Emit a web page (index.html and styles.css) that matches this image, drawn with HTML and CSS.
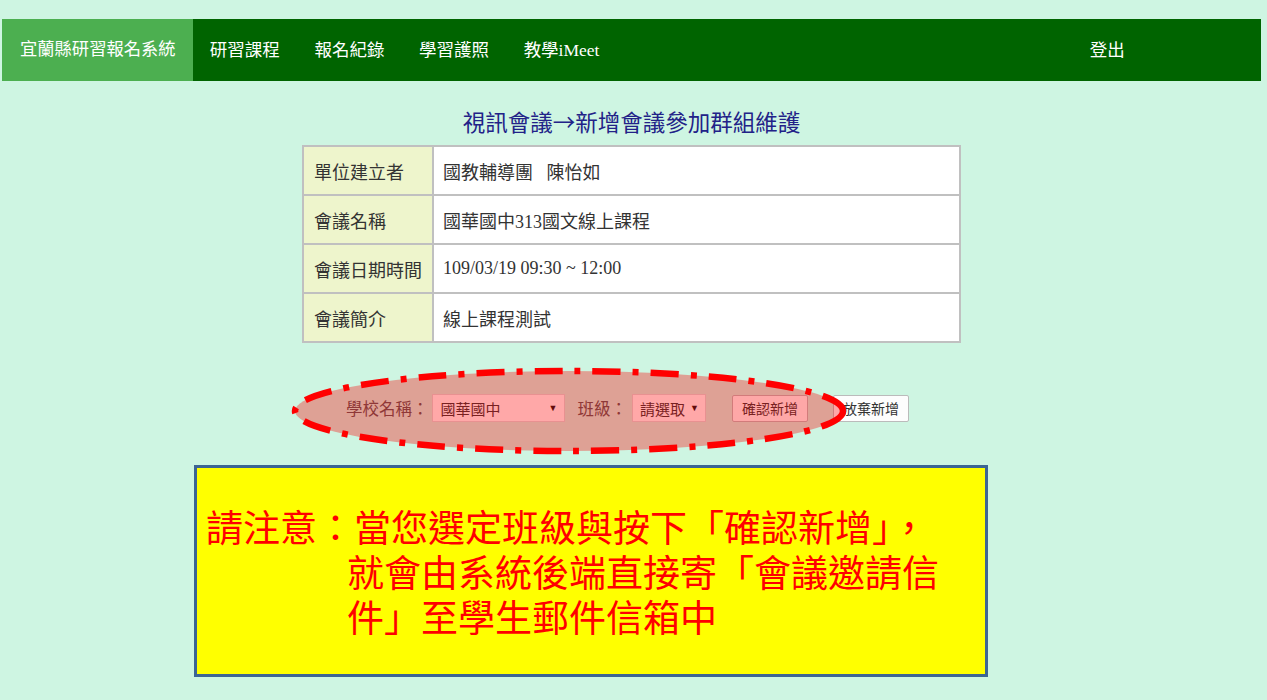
FILE: index.html
```html
<!DOCTYPE html>
<html lang="zh-Hant">
<head>
	<meta charset="UTF-8">
	<title>宜蘭縣研習報名系統</title>
	<link rel="stylesheet" href="styles.css">
</head>
<body>
	<div class="navbar">
		<a href="javascript:;" class="brand">宜蘭縣研習報名系統</a>
		<ul class="menu">
			<li><a href="javascript:;">研習課程</a></li>
			<li><a href="javascript:;">報名紀錄</a></li>
			<li><a href="javascript:;">學習護照</a></li>
			<li><a href="javascript:;">教學iMeet</a></li>
		</ul>
		<ul class="menu menu-right">
			<li><a href="javascript:;">登出</a></li>
		</ul>
	</div>

	<div class="main">
		<h2 class="title">視訊會議→新增會議參加群組維護</h2>
		<table class="info">
			<tr>
				<td class="head">單位建立者</td>
				<td>國教輔導團&nbsp;&nbsp;&nbsp;陳怡如</td>
			</tr>
			<tr>
				<td class="head">會議名稱</td>
				<td>國華國中313國文線上課程</td>
			</tr>
			<tr>
				<td class="head">會議日期時間</td>
				<td>109/03/19 09:30 ~ 12:00</td>
			</tr>
			<tr>
				<td class="head">會議簡介</td>
				<td>線上課程測試</td>
			</tr>
		</table>

		<form class="pick" onsubmit="return false;">
			<label>學校名稱：</label>
			<span class="sel sel-school">
				<select><option>國華國中</option></select>
			</span>
			<label>班級：</label>
			<span class="sel sel-class">
				<select><option>請選取</option></select>
			</span>
			<button class="btn btn-ok">確認新增</button>
			<button class="btn btn-cancel">放棄新增</button>
			<svg class="mark" width="562" height="90" viewBox="0 0 562 90">
				<ellipse cx="281" cy="44" rx="274" ry="40" fill="rgba(255,0,0,0.34)" stroke="#ff0000" stroke-width="6.5" stroke-dasharray="28 12 6 12"/>
			</svg>
		</form>

		<div class="notice">
			<p>請注意：當您選定班級與按下「確認新增」，就會由系統後端直接寄「會議邀請信件」至學生郵件信箱中</p>
		</div>
	</div>
</body>
</html>
```

FILE: styles.css
```css
* {
	box-sizing: border-box;
}
body {
	margin: 0;
	padding: 19px 6px 0 2px;
	background: #cef5e2;
	font-family: "Liberation Serif", "Noto Sans CJK TC", serif;
	color: #333;
}
a {
	text-decoration: none;
}

/* top bar */
.navbar {
	display: flex;
	height: 62px;
	background: #006400;
}
.brand {
	padding: 0 17px 0 18px;
	background: #4caf50;
	color: #fff;
	font-size: 17.3px;
	line-height: 62px;
}
.menu {
	display: flex;
	margin: 0;
	padding: 0;
	list-style: none;
}
.menu a {
	display: block;
	padding: 0 17.3px;
	color: #fff;
	font-size: 17.5px;
	line-height: 62px;
}
.menu-right {
	margin-left: auto;
	margin-right: 119px;
}

.title {
	margin: 25px 0 9px;
	text-align: center;
	font-family: "Noto Sans CJK TC", sans-serif;
	font-size: 22.5px;
	font-weight: normal;
	line-height: 30px;
	color: #222288;
}

/* meeting info */
.info {
	width: 659px;
	margin: 0 auto;
	border-collapse: collapse;
	background: #fff;
}
.info td {
	height: 49px;
	padding: 0 9px;
	border: 2px solid #c0c0c0;
	font-size: 18px;
	color: #333;
}
.info .head {
	width: 1px;
	padding: 0 10px;
	white-space: nowrap;
	background: #eef5cc;
}

/* school / class picker */
.pick {
	position: relative;
	display: flex;
	align-items: center;
	justify-content: center;
	height: 84px;
	margin: 26px 0 0;
	padding: 0 8px 6px 0;
}
.pick label {
	margin-right: 3px;
	font-size: 16.5px;
	color: #555;
}
.sel {
	position: relative;
	display: inline-block;
}
.sel select {
	-webkit-appearance: none;
	appearance: none;
	height: 28px;
	padding: 0 0 0 8px;
	border: 1px solid #dcdcdc;
	border-radius: 0;
	background: #fff;
	font-family: "Noto Sans CJK TC", sans-serif;
	font-size: 15px;
	color: #333;
}
.sel::after {
	content: "▼";
	position: absolute;
	right: 7px;
	top: 8px;
	font-size: 9px;
	line-height: 12px;
	color: #111;
	pointer-events: none;
}
.sel-school {
	margin-right: 13px;
}
.sel-school select {
	width: 133px;
}
.sel-class {
	margin-left: 2px;
	margin-right: 26px;
}
.sel-class select {
	width: 74px;
	padding-left: 7px;
}
.btn {
	width: 76px;
	height: 27px;
	padding: 0;
	border: 1px solid #bbb;
	border-radius: 2px;
	background: #fdfdfd;
	font-family: "Noto Sans CJK TC", sans-serif;
	font-size: 14px;
	color: #333;
}
.btn-ok {
	margin-right: 25px;
}
.mark {
	position: absolute;
	left: 286px;
	top: -2px;
	pointer-events: none;
}

/* notice box */
.notice {
	display: flex;
	align-items: center;
	width: 794px;
	height: 212px;
	margin: 12px 0 20px 192px;
	border: 3px solid #3d6593;
	background: #ffff00;
}
.notice p {
	flex: 1;
	margin: 0;
	padding: 0 30px 0 150px;
	text-indent: -141px;
	font-family: "Noto Sans CJK TC", sans-serif;
	font-size: 37px;
	line-height: 45px;
	color: #ff0000;
}
```
